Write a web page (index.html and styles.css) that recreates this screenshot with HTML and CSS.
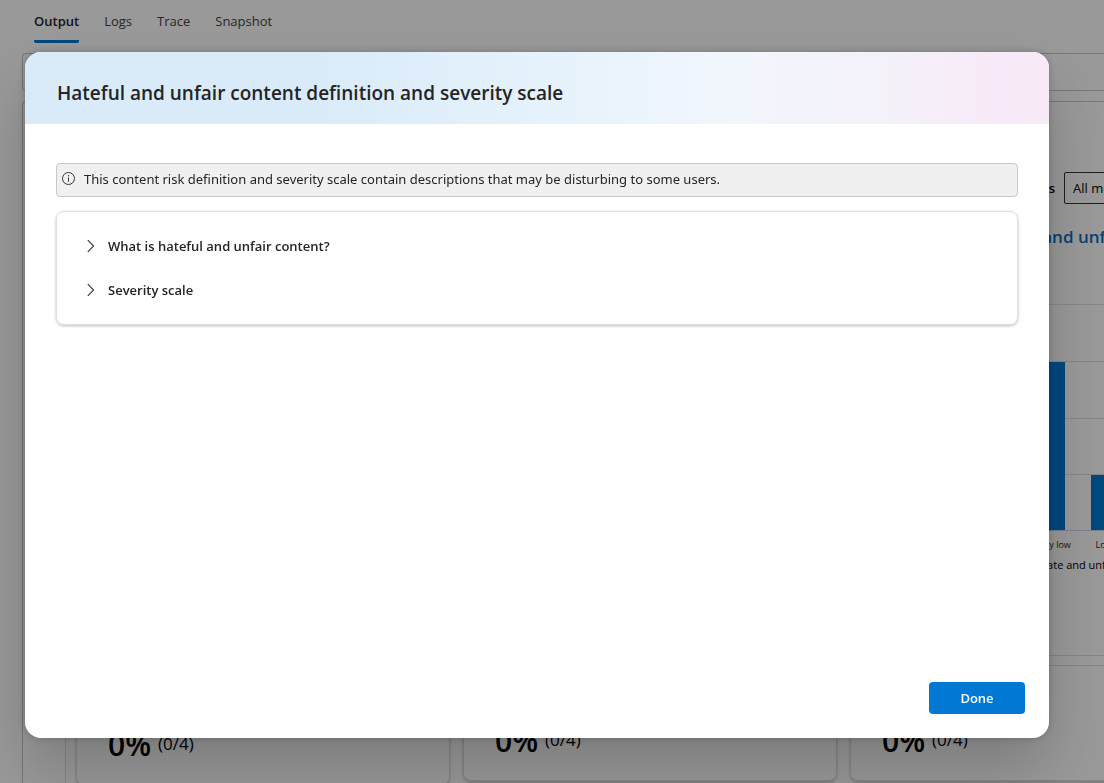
FILE: index.html
```html
<!DOCTYPE html>
<html lang="en">
<head>
<meta charset="utf-8">
<title>Evaluation output</title>
<link rel="stylesheet" href="styles.css">
</head>
<body>
<div class="page">
  <nav class="tabs">
    <a class="tab tab-active" href="#output">Output</a>
    <a class="tab" href="#logs">Logs</a>
    <a class="tab" href="#trace">Trace</a>
    <a class="tab" href="#snapshot">Snapshot</a>
  </nav>
  <div class="toolbar"></div>
  <main class="panel">
    <section class="chart-section">
      <div class="chart-column">
        <div class="filter">
          <label class="filter-label" for="metric">Metrics</label>
          <select class="filter-select" id="metric"><option>All metrics</option></select>
        </div>
        <h2 class="chart-title">Hateful and unfair content</h2>
        <svg class="chart" width="240" height="280" viewBox="0 0 240 280">
          <path d="M0 14.500H240M0 71.500H240M0 128.500H240M0 184.500H240" stroke="#e0e0e0"/>
          <path d="M61 72h27v168H61zM114 185h27v55h-27z" fill="#0078d4"/>
          <path d="M0 240.500H240" stroke="#ccd6eb"/>
          <text class="tick" x="76" y="258">Very low</text>
          <text class="tick" x="127" y="258">Low</text>
          <text class="axis" x="62" y="279">Hate and unfairness</text>
        </svg>
      </div>
    </section>
    <section class="metrics">
      <article class="metric metric-tall"><strong class="rate">0%</strong><span class="count">(0/4)</span></article>
      <article class="metric"><strong class="rate">0%</strong><span class="count">(0/4)</span></article>
      <article class="metric"><strong class="rate">0%</strong><span class="count">(0/4)</span></article>
    </section>
  </main>
</div>
<div class="overlay">
  <div class="dialog" role="dialog" aria-modal="true" aria-labelledby="dialog-title">
    <header class="dialog-header"><h1 class="dialog-title" id="dialog-title">Hateful and unfair content definition and severity scale</h1></header>
    <div class="dialog-body">
      <div class="notice">
        <svg width="14" height="14" viewBox="0 0 14 14" fill="none" stroke="#333" aria-hidden="true"><circle cx="6.500" cy="6.500" r="6"/><path d="M6.500 5.500v4.200"/><circle cx="6.500" cy="3.800" r=".7" fill="#333" stroke="none"/></svg>
        <span>This content risk definition and severity scale contain descriptions that may be disturbing to some users.</span>
      </div>
      <div class="accordion">
        <button class="accordion-item" type="button" aria-expanded="false">
          <svg width="14" height="14" viewBox="0 0 14 14" fill="none" stroke="#333" stroke-width="1.100" aria-hidden="true"><path d="M4.800 1.200 10.600 7 4.800 12.800"/></svg>
          <span>What is hateful and unfair content?</span>
        </button>
        <button class="accordion-item" type="button" aria-expanded="false">
          <svg width="14" height="14" viewBox="0 0 14 14" fill="none" stroke="#333" stroke-width="1.100" aria-hidden="true"><path d="M4.800 1.200 10.600 7 4.800 12.800"/></svg>
          <span>Severity scale</span>
        </button>
      </div>
    </div>
    <footer class="dialog-footer"><button class="done" type="button">Done</button></footer>
  </div>
</div>
</body>
</html>
```
FILE: styles.css
```css
* { box-sizing: border-box; }

body {
  margin: 0;
  overflow: hidden;
  background: #fff;
  color: #242424;
  font-family: "Segoe UI", "Open Sans", "Noto Sans", sans-serif;
  font-size: 13px;
}

button, select { font: inherit; color: inherit; }
h1, h2 { margin: 0; }

.page { height: 100vh; overflow: hidden; padding-left: 22px; }

.tabs { display: flex; gap: 25px; height: 53px; padding: 0 12px 10px; }
.tab {
  display: flex;
  align-items: center;
  padding-top: 2px;
  border-bottom: 3px solid transparent;
  color: #424242;
  text-decoration: none;
}
.tab-active { border-color: #0078d4; border-radius: 2px; color: #242424; font-weight: 600; }

.toolbar {
  height: 38px;
  margin-bottom: 10px;
  border: 1px solid #c8c8c8;
  border-right: 0;
  border-radius: 4px 0 0 4px;
}

.panel {
  border: 1px solid #c8c8c8;
  border-right: 0;
  border-radius: 4px 0 0 0;
  padding-left: 42px;
}

.chart-section {
  display: flex;
  justify-content: flex-end;
  height: 554px;
  padding-top: 70px;
  border-bottom: 1px solid #dedede;
}
.chart-column { width: 127px; overflow: hidden; white-space: nowrap; }
.filter { display: flex; align-items: center; justify-content: flex-end; gap: 9px; width: 190px; }
.filter-label { color: #000; font-weight: 600; }
.filter-select {
  width: 103px;
  height: 32px;
  padding: 0 8px;
  border: 1px solid #333;
  border-radius: 2px;
  background: #fff;
  color: #000;
  appearance: none;
}
.chart-title { margin: 21px 0 41px; color: #0f6cbd; font-size: 17px; line-height: 24px; font-weight: 600; }
.chart { display: block; }
.tick { fill: #242424; font-size: 9px; text-anchor: middle; }
.axis { fill: #000; font-size: 11px; }

.metrics {
  display: flex;
  align-items: flex-start;
  gap: 13px;
  height: 200px;
  margin-top: 9px;
  padding-left: 10px;
  border: 1px solid #dedede;
  border-right: 0;
}
.metric {
  display: flex;
  flex: 0 0 374px;
  align-items: flex-end;
  gap: 7px;
  height: 115px;
  padding: 0 31px 20px;
  border: 1px solid #ddd;
  border-top: 0;
  border-radius: 0 0 8px 8px;
  box-shadow: 0 2px 3px #0003;
  color: #000;
}
.metric-tall { height: 119px; }
.rate { font-size: 30px; line-height: 38px; font-weight: 600; }
.count { font-size: 17px; line-height: 40px; }

.overlay {
  position: fixed;
  inset: 0;
  display: flex;
  padding: 52px 55px 45px 25px;
  background: #0006;
}
.dialog {
  display: flex;
  flex: 1;
  flex-direction: column;
  overflow: hidden;
  border-radius: 16px;
  background: #fff;
  box-shadow: 0 0 8px #0003, 0 32px 64px #0003;
}
.dialog-header {
  padding: 27px 32px 17px;
  background: linear-gradient(90deg, #d9ebf9 28%, #e8f3fc 55%, #f1f6fd 68%, #f4f1f9 84%, #f8eaf8 95%, #f8e9f6);
}
.dialog-title { font-size: 19px; line-height: 28px; font-weight: 600; }
.dialog-body { flex: 1; padding: 39px 31px 0; }
.notice {
  display: flex;
  align-items: center;
  gap: 8px;
  min-height: 34px;
  padding: 0 5px 2px;
  border: 1px solid #c8c8c8;
  border-radius: 4px;
  background: #f0f0f0;
  font-family: "Segoe UI", "Noto Sans", sans-serif;
}
.accordion {
  display: flex;
  flex-direction: column;
  margin-top: 14px;
  padding: 12px 26px;
  border: 1px solid #e0e0e0;
  border-radius: 8px;
  box-shadow: 0 1px 3px #0004;
}
.accordion-item {
  display: flex;
  align-items: center;
  gap: 11px;
  height: 44px;
  padding: 0;
  border: 0;
  background: none;
  font-weight: 600;
  text-align: left;
}
.dialog-footer { display: flex; justify-content: flex-end; padding: 0 24px 24px; }
.done {
  width: 96px;
  height: 32px;
  border: 0;
  border-radius: 4px;
  background: #0078d4;
  color: #fff;
  font-weight: 600;
}
```
